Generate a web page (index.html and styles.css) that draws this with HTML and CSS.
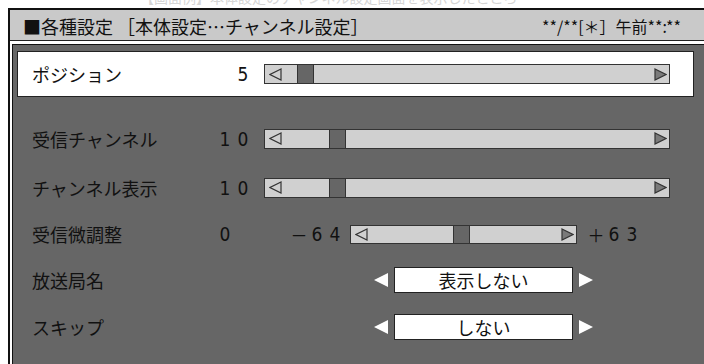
FILE: index.html
```html
<!DOCTYPE html>
<html>
<head>
	<meta charset="utf-8">
	<title>各種設定 チャンネル設定</title>
	<link rel="stylesheet" href="styles.css">
</head>
<body>
	<div class="caption"><div class="caption-text">【画面例】本体設定のチャンネル設定画面を表示したところ</div></div>
	<div class="frame">
		<div class="titlebar">
			<span class="title">■各種設定 ［本体設定…チャンネル設定］</span>
			<span class="clock">**/**[＊］午前**:**</span>
		</div>
		<div class="well">
			<div class="panel">
				<div class="row is-selected">
					<span class="label">ポジション</span>
					<span class="value"><i>5</i></span>
					<div class="slider">
						<svg class="arrow-l" width="13" height="13" viewBox="0 0 13 13"><path d="M12 1 L1 6.5 L12 12 Z" fill="none" stroke="#333" stroke-width="1.2"/></svg>
						<span class="thumb" style="left:32px"></span>
						<svg class="arrow-r" width="13" height="13" viewBox="0 0 13 13"><path d="M1 1 L12 6.5 L1 12 Z" fill="#7a7a7a" stroke="#333" stroke-width="1.2"/></svg>
					</div>
				</div>
				<div class="row">
					<span class="label">受信チャンネル</span>
					<span class="value"><i>1</i><i>0</i></span>
					<div class="slider">
						<svg class="arrow-l" width="13" height="13" viewBox="0 0 13 13"><path d="M12 1 L1 6.5 L12 12 Z" fill="none" stroke="#333" stroke-width="1.2"/></svg>
						<span class="thumb" style="left:64px"></span>
						<svg class="arrow-r" width="13" height="13" viewBox="0 0 13 13"><path d="M1 1 L12 6.5 L1 12 Z" fill="#7a7a7a" stroke="#333" stroke-width="1.2"/></svg>
					</div>
				</div>
				<div class="row">
					<span class="label">チャンネル表示</span>
					<span class="value"><i>1</i><i>0</i></span>
					<div class="slider">
						<svg class="arrow-l" width="13" height="13" viewBox="0 0 13 13"><path d="M12 1 L1 6.5 L12 12 Z" fill="none" stroke="#333" stroke-width="1.2"/></svg>
						<span class="thumb" style="left:64px"></span>
						<svg class="arrow-r" width="13" height="13" viewBox="0 0 13 13"><path d="M1 1 L12 6.5 L1 12 Z" fill="#7a7a7a" stroke="#333" stroke-width="1.2"/></svg>
					</div>
				</div>
				<div class="row row-fine">
					<span class="label">受信微調整</span>
					<span class="value lead"><i>0</i></span>
					<span class="range-min"><i class="sign">－</i><i>6</i><i>4</i></span>
					<div class="slider short">
						<svg class="arrow-l" width="13" height="13" viewBox="0 0 13 13"><path d="M12 1 L1 6.5 L12 12 Z" fill="none" stroke="#333" stroke-width="1.2"/></svg>
						<span class="thumb" style="left:102px"></span>
						<svg class="arrow-r" width="13" height="13" viewBox="0 0 13 13"><path d="M1 1 L12 6.5 L1 12 Z" fill="#7a7a7a" stroke="#333" stroke-width="1.2"/></svg>
					</div>
					<span class="range-max"><i class="sign">＋</i><i>6</i><i>3</i></span>
				</div>
				<div class="row row-option">
					<span class="label wide">放送局名</span>
					<svg class="pick" width="14" height="14" viewBox="0 0 14 14"><path d="M14 0 L0 7 L14 14 Z" fill="#fff"/></svg>
					<span class="choice">表示しない</span>
					<svg class="pick" width="14" height="14" viewBox="0 0 14 14"><path d="M0 0 L14 7 L0 14 Z" fill="#fff"/></svg>
				</div>
				<div class="row row-option">
					<span class="label wide">スキップ</span>
					<svg class="pick" width="14" height="14" viewBox="0 0 14 14"><path d="M14 0 L0 7 L14 14 Z" fill="#fff"/></svg>
					<span class="choice">しない</span>
					<svg class="pick" width="14" height="14" viewBox="0 0 14 14"><path d="M0 0 L14 7 L0 14 Z" fill="#fff"/></svg>
				</div>
			</div>
		</div>
	</div>
</body>
</html>
```

FILE: styles.css
```css
*{
	margin: 0;
	padding: 0;
	box-sizing: border-box;
}
body{
	width: 704px;
	height: 364px;
	overflow: hidden;
	background: #fff;
	color: #111;
	font-family: "Noto Sans CJK JP", sans-serif;
}
i{
	font-style: normal;
}
.caption{
	height: 8px;
	overflow: hidden;
	padding-left: 140px;
}
.caption-text{
	margin-top: -11px;
	font-size: 14px;
	line-height: 16px;
	color: #d6d6d6;
}
.frame{
	width: 760px;
	margin-left: 8px;
	border: 2px solid #111;
	border-right: none;
	border-bottom: none;
}
.titlebar{
	display: flex;
	align-items: center;
	height: 31px;
	padding: 2px 0 0 13px;
	background: #c9c9c9;
	border-bottom: 1px solid #222;
	font-size: 18px;
}
.title{
	width: 519px;
}
.clock{
	font-size: 16px;
	white-space: nowrap;
}
.well{
	background: #fff;
	padding: 3px 0 0 2px;
}
.panel{
	height: 330px;
	padding: 6px 0 0 4px;
	background: #666;
	border-top: 1px solid #111;
	border-left: 1px solid #111;
}
.row{
	display: flex;
	align-items: center;
	width: 677px;
	height: 49px;
	padding-left: 14px;
	border: 1px solid transparent;
}
.row.is-selected{
	height: 46px;
	margin-bottom: 17px;
	background: #fff;
	border-color: #222;
}
.row-fine{
	height: 44px;
}
.row-option{
	height: 47px;
}
.label{
	width: 184px;
	font-size: 18px;
}
.label.wide{
	width: 342px;
}
.value, .range-min, .range-max{
	display: flex;
	align-items: center;
	font-family: "Liberation Sans Narrow", "DejaVu Sans Condensed", sans-serif;
	font-size: 19px;
}
.value{
	width: 36px;
	justify-content: flex-end;
}
.value.lead{
	justify-content: flex-start;
}
.value i, .range-min i, .range-max i{
	width: 18px;
	text-align: center;
}
.range-min i.sign, .range-max i.sign{
	font-family: "Noto Sans CJK JP", sans-serif;
	font-size: 17px;
}
.range-min{
	margin-left: 38px;
}
.range-max{
	margin-left: 10px;
}
.slider{
	position: relative;
	display: flex;
	align-items: center;
	justify-content: space-between;
	width: 406px;
	height: 20px;
	margin-left: 12px;
	padding: 0 2px 0 4px;
	background: #d0d0d0;
	border: 1px solid #333;
}
.slider.short{
	width: 227px;
	height: 19px;
	margin-left: 6px;
}
.thumb{
	position: absolute;
	top: 0;
	bottom: 0;
	width: 17px;
	background: #666;
	border-left: 1px solid #333;
	border-right: 1px solid #333;
}
.choice{
	width: 179px;
	height: 26px;
	margin: 0 6px;
	background: #fff;
	border: 1px solid #222;
	font-size: 18px;
	line-height: 24px;
	text-align: center;
}
```
